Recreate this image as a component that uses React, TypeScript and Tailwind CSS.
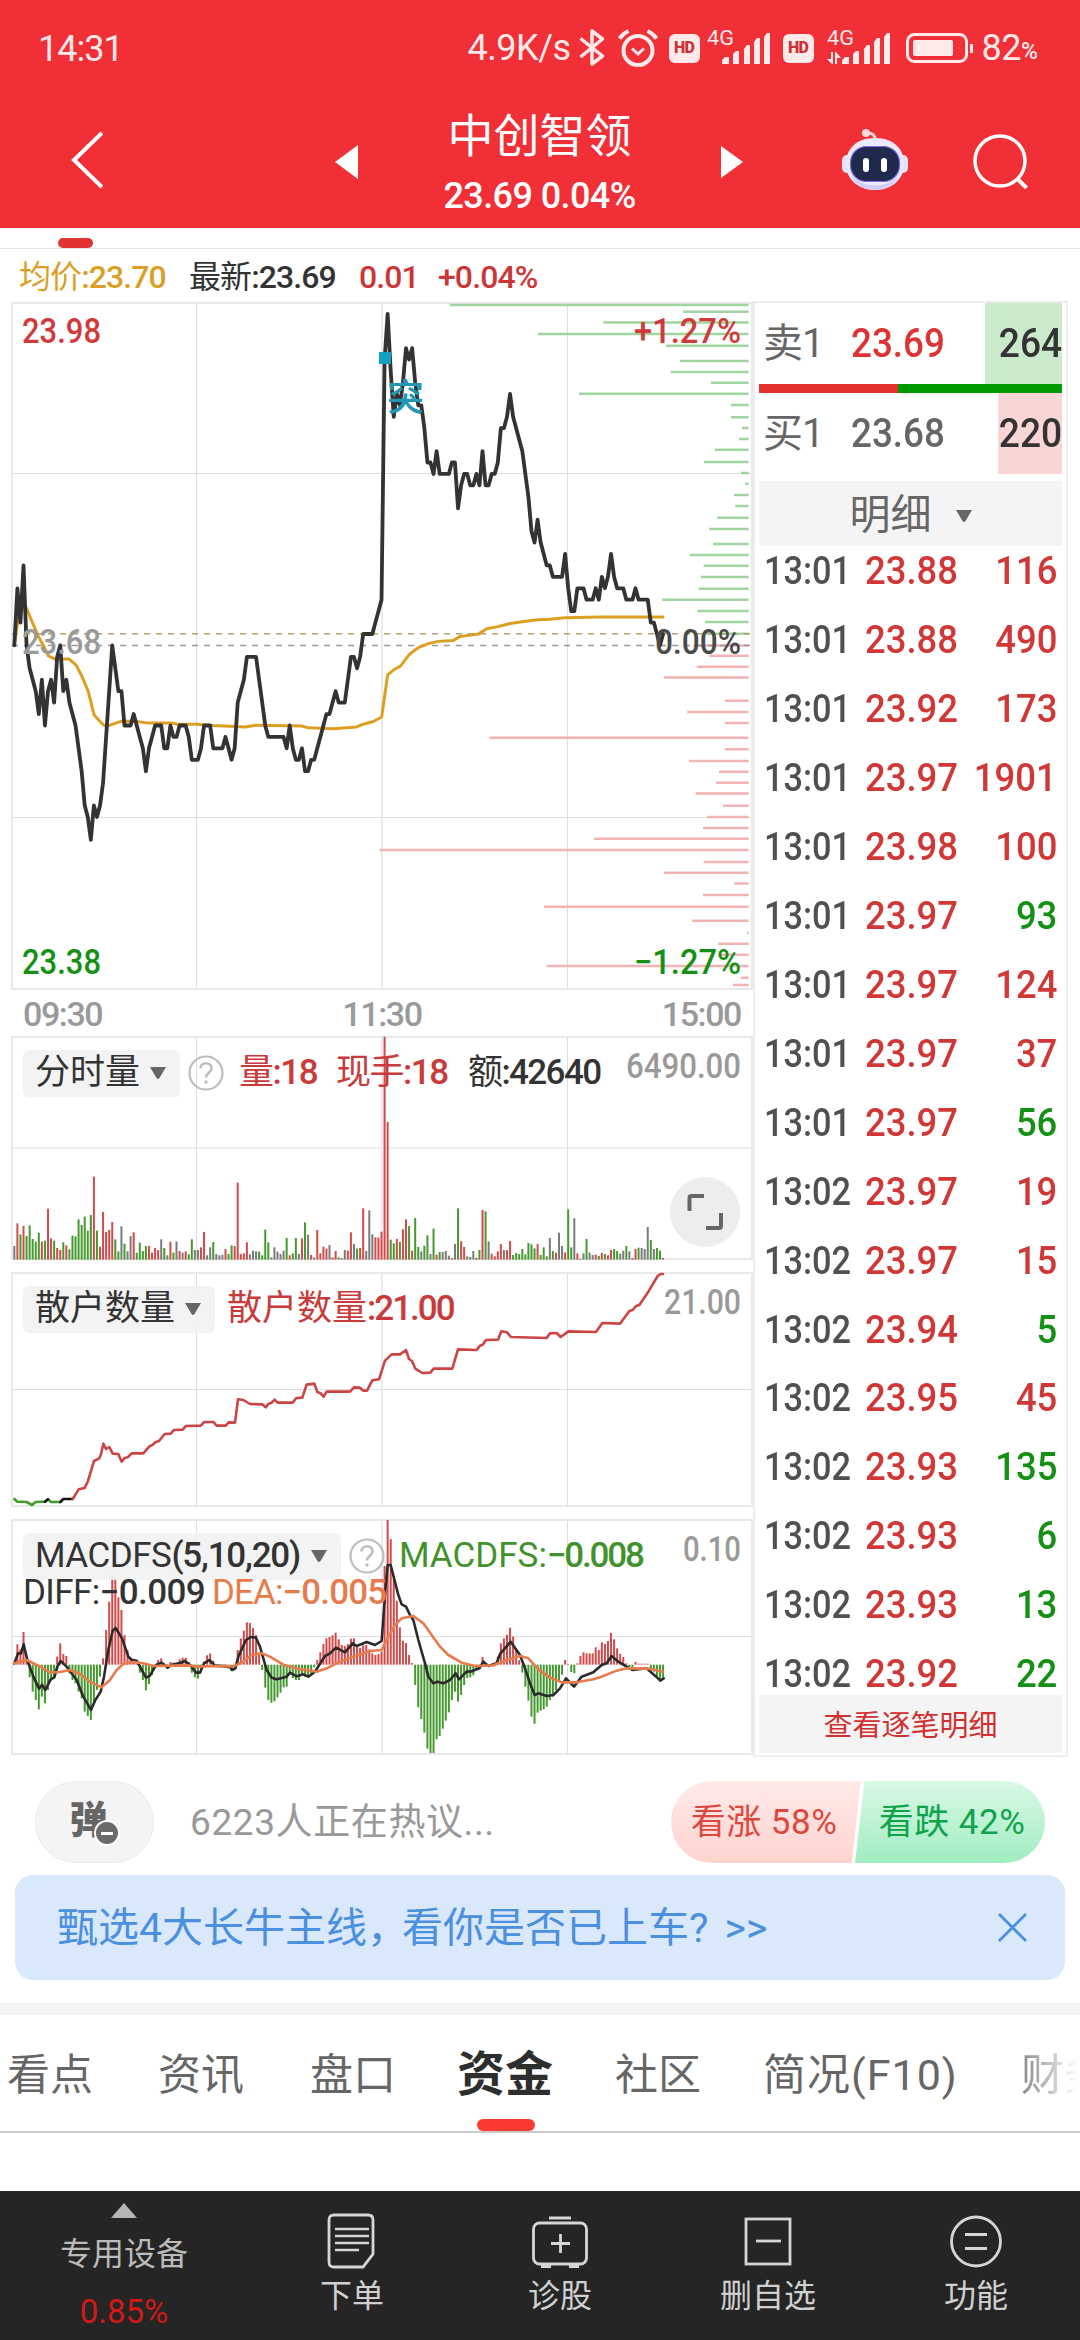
import type { ReactNode } from "react"
import { clsx } from "clsx"

const COLORS: Record<string, string> = { r: "#d24a4a", g: "#45992f", k: "#7b7b7b" }

// one entry per minute, in ticks of 0.01 from the previous close
const prices = [
  0, 5, 2, 7, 0, -2, -3, -4, -6, -3, -7, -4, -3, -5, -1, 0, -4, -3, -5, -6, -7, -9, -11, -14, -15, -17, -14, -15, -14, -12,
  -8, -4, 0, -2, -4, -4, -7, -7, -7, -6, -7, -8, -9, -11, -9, -8, -7, -7, -7, -9, -9, -7, -8, -8, -7, -7, -7, -8, -10, -10,
  -10, -9, -7, -7, -7, -9, -9, -9, -9, -8, -9, -10, -9, -5, -4, -3, -1, -1, -1, -1, -3, -5, -7, -8, -8, -8, -8, -8, -8, -9,
  -7, -9, -10, -10, -9, -11, -11, -10, -10, -9, -8, -7, -6, -6, -5, -4, -5, -5, -5, -3, -1, -1, -2, -1, 1, 1, 1, 1, 2, 3,
  4, 25, 29, 24, 20, 22, 21, 23, 26, 25, 26, 23, 21, 21, 19, 16, 16, 15, 17, 15, 15, 15, 15, 16, 16, 12, 14, 15, 15, 14,
  14, 15, 14, 17, 14, 14, 15, 15, 16, 19, 19, 20, 22, 20, 19, 18, 17, 15, 13, 10, 9, 11, 9, 8, 7, 7, 6, 6, 6, 6,
  8, 5, 3, 3, 5, 5, 5, 4, 4, 4, 5, 4, 6, 5, 6, 8, 6, 5, 5, 5, 4, 4, 4, 5, 4, 4, 4, 4, 2, 2,
  1, 0, 1,
]

const average =
  "43,783 52,740 60,712 70,702 80,703 90,722 115,765 130,785 145,808 165,815 207,815 228,828 245,852 265,887 282,938 300,953 313,962 330,961 365,952 410,953 440,956 515,956 530,959 590,959 640,962 735,965 770,961 905,963 925,967 1000,969 1070,965 1090,959 1120,953 1145,943 1163,850 1183,838 1202,830 1227,806 1240,798 1255,790 1285,781 1315,776 1360,774 1380,765 1435,760 1460,748 1490,744 1535,736 1605,729 1650,727 1695,724 1800,722 1989,722"

// order book depth: [left end, y]
const sellDepth = [
  [270, 33], [969, 48], [730, 72], [534, 97], [918, 123], [960, 157], [932, 181], [1053, 205], [657, 229], [1113, 254],
  [1113, 281], [1146, 305], [1137, 329], [1064, 353], [1032, 380], [1143, 404], [1155, 428], [1122, 453], [1126, 477],
  [1072, 503], [1048, 528], [1059, 561], [990, 585], [1031, 609], [1023, 634], [1016, 660], [906, 684], [1012, 709],
  [1035, 733], [1040, 759],
]
const buyDepth = [
  [1000, 785], [1048, 808], [1010, 832], [912, 856], [1095, 907], [982, 932], [1094, 956], [388, 989], [1094, 1014],
  [987, 1040], [1077, 1064], [1068, 1088], [1007, 1112], [1089, 1139], [1041, 1164], [1029, 1188], [702, 1212], [59, 1237],
  [1031, 1263], [912, 1287], [1123, 1311], [1029, 1336], [552, 1362], [997, 1393], [1161, 1420], [1075, 1444], [1075, 1468],
  [560, 1493], [1143, 1519], [1119, 1535],
]

const volumes = (
  "k678 r610 g643 r618 g648 g616 g657 g665 g638 r665 g662 r566 r655 g662 r684 r690 g667 r676 g688 g647 g649 g598 g615 g590 g632 g585 r470 g632 r680 r576 " +
  "r636 r630 r606 g658 g694 k619 g671 k694 k648 r637 g698 g668 g693 g678 r678 r698 r684 r690 k658 g684 k706 r665 g698 k664 r693 k698 r694 g703 g658 k690 " +
  "k690 r682 r636 k706 k682 g666 k702 k706 k704 r687 g702 g676 r678 r488 r702 r700 r667 k703 k692 k694 g695 g706 g629 g667 k712 k682 k695 k702 k692 g654 " +
  "r706 g700 g654 k702 r655 g607 k644 r705 k712 r630 r700 r680 r686 k675 r712 r693 g712 k714 k690 r692 r637 k672 g686 r684 r565 k693 k571 k643 r652 r653 " +
  "r635 r50 r306 g659 g670 r657 g666 r628 r598 g618 r692 g594 g681 k694 g677 g646 k702 g626 r704 g696 k696 k693 k707 r714 k672 g565 r664 r681 k709 g711 " +
  "k693 r713 g690 r570 g574 k664 r701 r709 r694 r672 k690 r690 r663 g705 g699 g702 g687 g703 g669 g673 g685 r672 g705 g682 g709 k654 g693 r698 k638 k678 " +
  "r697 g568 g682 k595 r700 r716 k700 g657 k698 k705 r704 g708 r699 g702 r706 r690 g687 g693 k701 k692 g678 k694 r714 r687 g683 k684 k687 k621 g660 k687 " +
  "g684 g692 r714"
).split(" ")

const retail =
  "218,1437 236,1408 254,1404 264,1383 282,1323 298,1315 303,1303 310,1271 318,1287 328,1281 338,1301 355,1302 365,1325 374,1314 383,1312 395,1300 430,1300 448,1279 457,1275 466,1267 477,1263 494,1242 512,1241 522,1230 548,1229 558,1218 602,1217 613,1206 640,1206 650,1217 677,1217 686,1207 705,1208 714,1138 730,1140 750,1152 787,1153 797,1162 806,1151 815,1148 824,1139 833,1148 878,1148 889,1134 907,1133 920,1094 943,1091 952,1116 962,1120 971,1130 980,1115 1050,1115 1062,1102 1080,1103 1090,1112 1101,1112 1117,1081 1137,1078 1155,1022 1175,1003 1200,1003 1218,990 1227,1017 1236,1023 1246,1046 1267,1059 1291,1058 1301,1046 1357,1046 1374,988 1430,990 1439,978 1448,974 1458,960 1494,959 1504,934 1521,937 1533,951 1640,954 1650,940 1670,939 1682,951 1705,934 1788,936 1807,909 1860,911 1888,873 1898,870 1908,858 1918,855 1942,820 1973,768 1982,762 1989,762"

const macd = [
  460, 403, 418, 366, 440, 502, 545, 570, 598, 560, 580, 540, 512, 500, 440, 400, 432, 438, 490, 510, 520, 545, 565, 605, 618,
  630, 575, 540, 500, 445, 360, 275, 195, 204, 262, 300, 375, 420, 445, 450, 462, 488, 510, 541, 522, 495, 466, 450, 445, 460,
  470, 456, 458, 460, 448, 443, 444, 456, 488, 502, 506, 485, 455, 436, 430, 452, 462, 470, 468, 462, 476, 482, 468, 420, 385,
  362, 337, 339, 354, 375, 428, 480, 533, 570, 578, 574, 562, 548, 532, 530, 492, 504, 510, 510, 496, 500, 502, 490, 472, 450,
  427, 402, 385, 381, 376, 368, 388, 405, 408, 402, 386, 385, 408, 414, 406, 405, 418, 430, 435, 432, 425, 168, 30, 87, 200,
  272, 352, 392, 399, 435, 459, 525, 592, 627, 668, 716, 729, 729, 688, 678, 656, 632, 607, 570, 545, 575, 555, 525, 504, 502,
  496, 480, 478, 441, 462, 470, 467, 458, 440, 400, 385, 374, 353, 380, 420, 450, 488, 530, 572, 620, 641, 608, 602, 598, 590,
  570, 560, 540, 515, 494, 450, 462, 486, 490, 460, 438, 427, 430, 430, 430, 412, 420, 397, 402, 393, 369, 388, 415, 432, 441,
  460, 470, 472, 456, 461, 461, 461, 461, 478, 485, 500, 514, 502,
]
const diff =
  "43,460 54,430 63,430 71,403 82,450 100,500 117,536 126,524 136,540 152,508 163,502 172,470 182,453 200,470 230,510 250,560 273,600 285,572 302,545 312,500 325,420 338,362 347,354 366,385 385,440 395,449 410,452 428,485 438,503 450,497 468,465 485,458 503,473 515,464 540,459 555,453 570,465 588,488 600,488 612,460 628,450 645,467 690,470 696,480 706,475 715,440 738,390 752,381 768,383 780,410 800,480 815,503 830,508 860,500 870,488 890,499 910,493 925,500 945,485 975,438 990,430 1008,413 1035,427 1058,400 1070,408 1100,396 1125,405 1145,393 1156,240 1163,165 1172,165 1195,255 1205,283 1218,290 1230,315 1240,330 1255,390 1275,460 1285,500 1300,520 1312,515 1330,520 1350,510 1367,490 1377,508 1400,485 1415,484 1438,475 1450,455 1465,468 1490,460 1500,432 1532,395 1560,435 1575,475 1590,520 1604,555 1615,550 1640,558 1660,555 1680,535 1698,505 1722,530 1745,500 1780,487 1805,465 1820,460 1835,438 1855,455 1880,470 1898,480 1940,475 1965,497 1981,512 1991,505"
const dea =
  "43,460 80,450 120,470 150,487 180,486 210,480 240,492 270,515 305,532 330,510 350,480 370,462 400,456 430,460 460,468 560,466 600,470 640,468 700,469 730,455 755,435 785,430 810,440 850,464 900,478 950,485 980,475 1010,460 1060,440 1110,423 1145,420 1165,380 1185,345 1205,325 1240,318 1270,340 1295,375 1320,410 1345,435 1385,458 1425,468 1480,466 1520,450 1560,438 1585,445 1615,478 1650,503 1685,517 1730,517 1780,508 1800,502 1850,482 1880,475 1948,476 1989,485"

const trades: [string, string, string, boolean][] = [
  ["13:01", "23.88", "116", true],
  ["13:01", "23.88", "490", true],
  ["13:01", "23.92", "173", true],
  ["13:01", "23.97", "1901", true],
  ["13:01", "23.98", "100", true],
  ["13:01", "23.97", "93", false],
  ["13:01", "23.97", "124", true],
  ["13:01", "23.97", "37", true],
  ["13:01", "23.97", "56", false],
  ["13:02", "23.97", "19", true],
  ["13:02", "23.97", "15", true],
  ["13:02", "23.94", "5", false],
  ["13:02", "23.95", "45", true],
  ["13:02", "23.93", "135", false],
  ["13:02", "23.93", "6", false],
  ["13:02", "23.93", "13", false],
  ["13:02", "23.92", "22", false],
]

const minuteX = (i: number) => 43 + i * 9.18

function Line({ points, stroke, width = 4 }: { points: string; stroke: string; width?: number }) {
  return (
    <polyline
      points={points}
      fill="none"
      stroke={stroke}
      strokeWidth={width}
      strokeLinejoin="round"
      strokeLinecap="round"
      vectorEffect="non-scaling-stroke"
    />
  )
}

function Grid({ height, rows }: { height: number; rows: number[] }) {
  return (
    <g stroke="#dedede" strokeWidth="1">
      {rows.map((y) => <path key={y} d={`M12 ${y}H753`} />)}
      <path d={`M196.500 0V${height}M567.500 0V${height}`} />
      <path d={`M382 0V${height}`} stroke="#ebebeb" strokeWidth="2" />
      <rect x="12" y="1" width="740" height={height - 2} fill="none" stroke="#e9e9e9" strokeWidth="2" />
    </g>
  )
}

function Label({ x, y, w, color, children, end }: { x: number; y: number; w: number; color: string; children: string; end?: boolean }) {
  return (
    <text
      x={x}
      y={y}
      fill={color}
      fontSize="34.500"
      fontWeight="500"
      textAnchor={end ? "end" : "start"}
      textLength={w}
      lengthAdjust="spacingAndGlyphs"
    >
      {children}
    </text>
  )
}

function Caret({ className }: { className?: string }) {
  return <svg viewBox="0 0 16 12" className={clsx("h-3 w-4", className)}><path d="M0 0h16L9.500 11q-1.500 2-3 0z" fill="#666" /></svg>
}

function Selector({ children, className }: { children: ReactNode; className: string }) {
  return (
    <div className={clsx("flex h-[47px] items-center justify-between rounded-md bg-[#f2f2f2]/90 pl-3 pr-3.5 text-[35px] text-[#333]", className)}>
      <span className="whitespace-nowrap">{children}</span>
      <Caret />
    </div>
  )
}

function Help() {
  return (
    <svg viewBox="0 0 36 36" className="size-9" fill="none" stroke="#bdbdbd" strokeWidth="2.200">
      <circle cx="18" cy="18" r="16.500" />
      <path d="M12.500 13.500c0-7 11-7 11 0 0 4-5.500 4.500-5.500 9" strokeWidth="2.500" />
      <circle cx="18" cy="27" r="1.700" fill="#bdbdbd" stroke="none" />
    </svg>
  )
}

function Signal({ data }: { data?: boolean }) {
  return (
    <svg viewBox="0 0 67 44" className="h-11 w-[67px] shrink-0" fill="#ffe9e9">
      <text x="0" y="21" fontSize="21" textLength="27" lengthAdjust="spacingAndGlyphs">4G</text>
      <path d="M15 40v-4l3-3h4v7zM26 40V30l3-3h3v13zM37 40V25l3-4h3v19zM47 40V18l3-4h3v26zM57 40V13l3-4h3v31z" />
      {data && <path d="M0 35h4v-7h2v12H5zM8 40V28h1l5 6h-4v6z" />}
    </svg>
  )
}

function Hd() {
  return (
    <span className="flex h-[29px] w-[31px] items-center justify-center rounded-md bg-[#ffe9e9] text-[16px] font-black tracking-tighter text-[#c93338]">
      HD
    </span>
  )
}

function StatusBar() {
  return (
    <div className="flex h-24 items-center pl-[38px] pr-[42px] text-[36px] text-[#ffe9e9]">
      <span className="pt-0.5 tracking-[-1px]">14:31</span>
      <span className="ml-auto tracking-[-0.500px]">4.9K/s</span>
      <svg viewBox="0 0 26 40" className="ml-2 h-10 w-[26px]" fill="none" stroke="#ffe9e9" strokeWidth="3.500">
        <path d="M1.500 10.500l22 17.500L13 36V3l10.500 8L1.500 29" strokeLinejoin="round" />
      </svg>
      <svg viewBox="0 0 40 38" className="ml-[13px] h-[38px] w-10" fill="none" stroke="#ffe9e9" strokeWidth="4">
        <circle cx="20" cy="21.500" r="14.500" />
        <path d="M1.500 9.500C4 6 7 3.500 10.500 2M38.500 9.500C36 6 33 3.500 29.500 2" />
        <path d="M14 19.500l6 5.500 6-5.500" strokeWidth="3" />
      </svg>
      <div className="ml-[11px] flex items-center">
        <Hd />
        <div className="mb-1 ml-[7px]"><Signal /></div>
        <div className="ml-[9px]"><Hd /></div>
        <div className="mb-1 ml-[13px]"><Signal data /></div>
      </div>
      <svg viewBox="0 0 68 30" className="ml-3 h-[30px] w-[68px]" fill="none" stroke="#ffe9e9" strokeWidth="3">
        <rect x="1.500" y="1.500" width="59" height="27" rx="7" />
        <rect x="7" y="7" width="40" height="16" rx="2" fill="#ffe9e9" stroke="none" />
        <path d="M65.500 11v9" />
      </svg>
      <span className="ml-2 tracking-[-0.500px]">82</span>
      <span className="mt-2 text-[23px] font-medium">%</span>
    </div>
  )
}

function Robot() {
  return (
    <svg viewBox="0 0 66 62" className="h-[62px] w-[66px]">
      <circle cx="24" cy="4" r="4" fill="#ffd9de" />
      <path d="M25 4c6 0 8 2 8.500 7" stroke="#ffd9de" strokeWidth="3" fill="none" />
      <rect x="0" y="26" width="10" height="18" rx="5" fill="#e2e3fb" />
      <rect x="56" y="26" width="10" height="18" rx="5" fill="#e2e3fb" />
      <path d="M33 9c19 0 29 11 29 26S50 61 33 61 4 50 4 35 14 9 33 9z" fill="#ece9fb" />
      <path d="M10 46c8 14 38 14 46 0-3 10-12 15-23 15S13 56 10 46z" fill="#cfcdf5" />
      <rect x="8.500" y="17.500" width="49" height="35" rx="16" fill="#202a4e" stroke="#7a6be0" strokeWidth="1.200" />
      <rect x="21" y="29" width="6" height="14" rx="3" fill="#fff" />
      <rect x="39" y="29" width="6" height="14" rx="3" fill="#fff" />
    </svg>
  )
}

function Header() {
  return (
    <header className="h-[228px] bg-[#f12f37] text-white">
      <StatusBar />
      <div className="flex h-[128px] items-center">
        <svg viewBox="0 0 32 58" className="ml-[71px] h-[58px] w-8" fill="none" stroke="#fff" strokeWidth="4">
          <path d="M31 2L3 29l28 27" />
        </svg>
        <svg viewBox="0 0 23 34" className="ml-[232px] mt-[3px] h-[34px] w-[23px]"><path d="M23 0v34L0 17z" fill="#fff" /></svg>
        <div className="flex w-[363px] flex-col items-center pt-2">
          <h1 className="text-[46px] leading-[60px]">中创智领</h1>
          <p className="mt-1 text-[36px] font-medium leading-[52px] tracking-[-0.600px]">23.69 0.04%</p>
        </div>
        <svg viewBox="0 0 22 32" className="mt-[3px] h-8 w-[22px]"><path d="M0 0v32l22-16z" fill="#fff" /></svg>
        <div className="ml-[99px]"><Robot /></div>
        <svg viewBox="0 0 56 56" className="ml-[65px] mt-[2px] h-14 w-14" fill="none" stroke="#fff" strokeWidth="3.500">
          <circle cx="27" cy="28" r="25" />
          <path d="M43.500 45l10 10" strokeWidth="4" />
        </svg>
      </div>
    </header>
  )
}

function PriceChart() {
  const points = prices.map((p, i) => `${minuteX(i)},${785 - p * 25.25}`).join(" ")
  return (
    <svg viewBox="0 0 754 688" className="h-[688px] w-[754px]">
      <Grid height={688} rows={[171.5, 515.5]} />
      <g transform="translate(0 -12) scale(.33333 .4528)" fill="none">
        <path d={sellDepth.map(([x, y]) => `M${x + 1080} ${y}H2246`).join("")} stroke="#a0d5a0" strokeWidth="2.5" vectorEffect="non-scaling-stroke" />
        <path d={buyDepth.map(([x, y]) => `M${x + 1080} ${y}H2246`).join("")} stroke="#f2b3b3" strokeWidth="2.5" vectorEffect="non-scaling-stroke" />
      </g>
      <path d="M12 331.700H750" stroke="#b5a06e" strokeWidth="1.500" strokeDasharray="6 6" />
      <path d="M12 343.500H750" stroke="#999" strokeWidth="1.500" strokeDasharray="6 6" />
      <g transform="translate(0 -12) scale(.33333 .4528)">
        <Line points={average} stroke="#dd9f22" width={3} />
        <Line points={points} stroke="#333" width={3.8} />
      </g>
      <rect x="379" y="50" width="12" height="12" fill="#16a0c0" />
      <text x="387" y="109" fontSize="37" fontWeight="500" fill="#2197b4" fontFamily="Noto Sans CJK SC">突</text>
      <Label x={22} y={41} w={79} color="#d13a3a">23.98</Label>
      <Label x={22} y={352} w={79} color="#9a9a9a">23.68</Label>
      <Label x={22} y={672} w={79} color="#149014">23.38</Label>
      <Label x={741} y={41} w={107} color="#d13a3a" end>+1.27%</Label>
      <Label x={741} y={352} w={86} color="#4a4a4a" end>0.00%</Label>
      <Label x={741} y={672} w={107} color="#149014" end>−1.27%</Label>
    </svg>
  )
}

function VolumePanel() {
  return (
    <div className="relative h-[224px]">
      <svg viewBox="0 0 754 224" className="absolute inset-0 h-[224px] w-[754px]">
        <Grid height={224} rows={[112]} />
        <g transform="translate(0 -16) scale(.33333)">
          {volumes.map((v, i) => {
            const top = Number(v.slice(1))
            return <rect key={i} x={minuteX(i) - 3} y={top} width="6" height={719 - top} fill={COLORS[v[0]]} />
          })}
        </g>
        <Label x={741} y={42} w={115} color="#999" end>6490.00</Label>
      </svg>
      <div className="relative flex items-center pl-[23px] pt-[11px] text-[35px] text-[#333]">
        <Selector className="w-[157px]">分时量</Selector>
        <div className="ml-2"><Help /></div>
        <span className="ml-[15px] w-[97px] whitespace-nowrap tracking-[-1.500px] text-[#c93a3a]">量<b className="font-medium">:18</b></span>
        <span className="w-[132px] whitespace-nowrap tracking-[-1.500px] text-[#c93a3a]">现手<b className="font-medium">:18</b></span>
        <span className="whitespace-nowrap tracking-[-1.600px]">额<b className="font-medium">:42640</b></span>
      </div>
      <div className="absolute left-[670px] top-[141px] flex size-[70px] items-center justify-center rounded-full bg-[#ededed]">
        <svg viewBox="0 0 36 36" className="size-9" fill="none" stroke="#666" strokeWidth="4">
          <path d="M2.500 17V4q0-2 2-2H17M34 19v13q0 2-2 2H19" />
        </svg>
      </div>
    </div>
  )
}

function RetailPanel() {
  return (
    <div className="relative mt-3 h-[235px]">
      <svg viewBox="0 0 754 235" className="absolute inset-0 h-[235px] w-[754px]">
        <Grid height={235} rows={[117.5]} />
        <g transform="translate(0 -252) scale(.33333)">
          <Line points="43,1437 52,1445 80,1446 96,1455 107,1446 135,1445 144,1438 153,1446 181,1446" stroke="#45992f" width={2.6} />
          <Line points="135,1445 144,1438" stroke="#111" width={2.6} />
          <Line points="181,1446 190,1437 218,1437" stroke="#111" width={2.6} />
          <Line points={retail} stroke="#cc4444" width={2.6} />
        </g>
        <Label x={741} y={42} w={77} color="#999" end>21.00</Label>
      </svg>
      <div className="relative flex items-center pl-[23px] pt-[11px] text-[35px]">
        <Selector className="w-[192px]">散户数量</Selector>
        <span className="ml-3 whitespace-nowrap text-[#c93a3a]">散户数量<b className="font-medium tracking-[-2px]">:21.00</b></span>
      </div>
    </div>
  )
}

function MacdPanel() {
  return (
    <div className="relative mt-3 h-[236px]">
      <svg viewBox="0 0 754 236" className="absolute inset-0 h-[236px] w-[754px]">
        <Grid height={236} rows={[117.5]} />
        <g transform="translate(0 -9) scale(.33333)">
          {macd.map((v, i) => (
            <rect key={i} x={minuteX(i) - 3} y={Math.min(v, 464)} width="6" height={Math.abs(464 - v)} fill={v < 464 ? COLORS.r : COLORS.g} />
          ))}
          <Line points={diff} stroke="#2b2b2b" width={2.6} />
          <Line points={dea} stroke="#e87b4c" width={2.6} />
        </g>
        <Label x={741} y={42} w={58} color="#999" end>0.10</Label>
      </svg>
      <div className="relative flex items-center pl-[23px] pt-[11px] text-[35px]">
        <Selector className="w-[318px] tracking-[-0.500px]">MACDFS<b className="font-medium tracking-[-1.200px]">(5,10,20)</b></Selector>
        <div className="ml-2"><Help /></div>
        <span className="ml-3.5 whitespace-nowrap text-[#41922c]">MACDFS:<b className="font-medium tracking-[-2.200px]">−0.008</b></span>
      </div>
      <div className="relative -mt-[13px] flex pl-[23px] text-[35px] leading-[46px]">
        <span className="w-[189px] whitespace-nowrap tracking-[-0.600px] text-[#333]">DIFF:<b className="font-medium">−0.009</b></span>
        <span className="whitespace-nowrap tracking-[-0.900px] text-[#e87b4c]">DEA:<b className="font-medium">−0.005</b></span>
      </div>
    </div>
  )
}

function Quote({ name, price, amount, up, depth }: { name: string; price: string; amount: string; up?: boolean; depth: string }) {
  return (
    <div className="flex h-[81px] items-stretch text-[40px] text-[#666]">
      <span className="flex w-[92px] items-center pl-1 tracking-[-1px]">{name}</span>
      <span className={clsx("flex flex-1 origin-left scale-x-[0.92] items-center font-medium", up && "text-[#dc3434]")}>{price}</span>
      <span className={clsx("flex items-center justify-end text-[#333]", depth)}>
        <b className="origin-right scale-x-[0.93] font-medium">{amount}</b>
      </span>
    </div>
  )
}

function TradePanel() {
  return (
    <aside className="-ml-px mt-[-1px] h-[1456px] w-[315px] border-2 border-[#ededed] bg-white pl-1 pr-1">
      <Quote name="卖1" price="23.69" amount="264" up depth="w-[77px] bg-[#cbe9cb]" />
      <div className="flex h-[9px]">
        <div className="w-[139px] bg-[#e63131]" />
        <div className="flex-1 bg-[#039903]" />
      </div>
      <Quote name="买1" price="23.68" amount="220" depth="w-[64px] bg-[#f9d5d5]" />
      <div className="mt-[7px] flex h-[65px] items-center justify-center gap-6 bg-[#f4f4f4] pt-1 text-[41px] text-[#666]">
        明细
        <Caret />
      </div>
      <div className="h-[1149px] overflow-hidden">
        <ul className="-mt-[9px]">
          {trades.map(([time, price, amount, up], i) => (
            <li key={i} className="flex h-[68.950px] items-center pl-[5px] pr-[5px] text-[39px] font-medium">
              <span className="w-[101px] origin-left scale-x-[0.88] text-[#505050]">{time}</span>
              <span className="origin-left scale-x-[0.935] text-[#d03838]">{price}</span>
              <span className={clsx("ml-auto origin-right scale-x-[0.935]", up ? "text-[#d03838]" : "text-[#149014]")}>{amount}</span>
            </li>
          ))}
        </ul>
      </div>
      <div className="flex h-[58px] items-center justify-center bg-[#f4f4f4] pt-1.5 text-[29px] text-[#d23030]">查看逐笔明细</div>
    </aside>
  )
}

function Discussion() {
  return (
    <section className="px-[15px] pt-[26px]">
      <div className="flex h-[82px] items-center pl-5 pr-5">
        <div className="relative flex h-[82px] w-[119px] items-center justify-center rounded-full border border-[#ebebeb] bg-[#f4f4f4]">
          <span className="mb-1 mr-3 text-[38px] font-black text-[#666]">弹</span>
          <span className="absolute left-[60px] top-[40px] flex size-[22px] items-center justify-center rounded-full bg-[#6b6b6b] ring-2 ring-white">
            <span className="h-[3px] w-3 bg-white" />
          </span>
        </div>
        <span className="ml-9 pt-0.5 text-[37px] tracking-[0.600px] text-[#999]">6223人正在热议...</span>
        <div className="ml-auto flex h-[82px] w-[374px] whitespace-nowrap text-[35px]">
          <div className="flex w-[190px] items-center justify-center rounded-l-full bg-linear-to-b from-[#ffeae9] to-[#fdd3cf] pr-1 pt-0.5 tracking-[0.500px] text-[#dc4840] [clip-path:polygon(0_0,100%_0,95%_100%,0_100%)]">
            看涨 58%
          </div>
          <div className="-ml-[6px] flex w-[190px] items-center justify-center rounded-r-full bg-linear-to-b from-[#d9f8e6] to-[#a0edc1] pl-1 pt-0.5 tracking-[0.500px] text-[#0fa34b] [clip-path:polygon(5%_0,100%_0,100%_100%,0_100%)]">
            看跌 42%
          </div>
        </div>
      </div>
      <div className="mt-3 flex h-[105px] items-center justify-between rounded-[18px] bg-[#dae8fb] pl-[42px] pr-[38px] text-[41px] text-[#4b8fdf]">
        <span className="whitespace-nowrap pt-0.5">
          甄选4大长牛主线<span className="-mr-[6px]">，</span>看你是否已上车? <span className="ml-1.5">&gt;&gt;</span>
        </span>
        <svg viewBox="0 0 29 29" className="size-[29px]" stroke="#4b8fdf" strokeWidth="2.800"><path d="M1 1l27 27M28 1L1 28" /></svg>
      </div>
    </section>
  )
}

function Tabs() {
  return (
    <nav className="relative flex h-[118px] items-center overflow-hidden whitespace-nowrap border-b-2 border-[#cacaca] pl-[7px] pt-1 text-[43px] text-[#666]">
      <span className="w-[151px] shrink-0">看点</span>
      <span className="w-[152px] shrink-0">资讯</span>
      <span className="w-[147px] shrink-0">盘口</span>
      <span className="w-[158px] shrink-0 text-[48px] font-bold text-[#2e2e2e]">资金</span>
      <span className="w-[148px] shrink-0">社区</span>
      <span className="w-[258px] shrink-0 tracking-[1px]">简况(F10)</span>
      <span className="w-[57px] shrink-0 overflow-hidden bg-linear-to-r from-[#888] to-[#fff] bg-clip-text text-transparent">财务</span>
      <span className="absolute bottom-0 left-[477px] h-3 w-[58px] rounded-full bg-[#fb3b31]" />
    </nav>
  )
}

function NavItem({ label, children }: { label: string; children: ReactNode }) {
  return (
    <div className="flex w-[208px] flex-col items-center pt-[22px]">
      <svg viewBox="0 0 56 56" className="size-14" fill="none" stroke="#d6d6d6" strokeWidth="2.800">{children}</svg>
      <span className="mt-1 text-[32px] leading-[46px]">{label}</span>
    </div>
  )
}

function BottomBar() {
  return (
    <footer className="mt-[58px] flex h-[149px] bg-[#252525] text-[#d0d0d0]">
      <div className="flex w-[248px] flex-col items-center pt-3">
        <svg viewBox="0 0 26 15" className="h-[15px] w-[26px]"><path d="M13 0l13 15H0z" fill="#b5b5b5" /></svg>
        <span className="mt-[13px] text-[32px] leading-[46px] text-[#bbb]">专用设备</span>
        <span className="mt-3 text-[33px] leading-[46px] text-[#d31818]">0.85%</span>
      </div>
      <NavItem label="下单">
        <path d="M10 2h34q5 0 5 5v34L39 54H10q-5 0-5-5V7q0-5 5-5z" />
        <path d="M11 16h34M11 23h34M11 30h34M11 37h24" strokeWidth="2.400" />
      </NavItem>
      <NavItem label="诊股">
        <rect x="1.500" y="10" width="53" height="41" rx="6" />
        <path d="M17 5h22M19 30.500h19M28.500 21v19" />
        <path d="M9 53.500h10M37 53.500h10" />
      </NavItem>
      <NavItem label="删自选">
        <rect x="6" y="6" width="44" height="45" />
        <path d="M16 28h25" />
      </NavItem>
      <NavItem label="功能">
        <circle cx="28" cy="28.500" r="24.500" />
        <path d="M17 21.500h22M17 35.500h22" />
      </NavItem>
    </footer>
  )
}

export default function App() {
  return (
    <div className="h-[2340px] w-[1080px] overflow-hidden bg-white font-[Roboto,'Noto_Sans_CJK_SC',sans-serif]">
      <Header />
      <div className="flex h-[21px] items-end border-b border-[#e3e3e3] pl-[58px]">
        <div className="h-[10px] w-[35px] rounded-full bg-[#e23333]" />
      </div>
      <div className="flex h-[53px] items-center whitespace-nowrap pl-[19px] pt-0.5 text-[32px] tracking-[-0.900px]">
        <span className="w-[170px] text-[#d99f27]">均价<b className="font-medium">:23.70</b></span>
        <span className="w-[170px] text-[#333]">最新<b className="font-medium">:23.69</b></span>
        <span className="w-[79px] font-medium text-[#cb3636]">0.01</span>
        <span className="font-medium text-[#cb3636]">+0.04%</span>
      </div>
      <main className="flex h-[1453px]">
        <div className="w-[754px]">
          <PriceChart />
          <div className="flex h-[46px] items-center justify-between pl-[23px] pr-[13px] pt-0.5 text-[34px] font-medium tracking-[-1.400px] text-[#999]">
            <span>09:30</span>
            <span>11:30</span>
            <span>15:00</span>
          </div>
          <VolumePanel />
          <RetailPanel />
          <MacdPanel />
        </div>
        <TradePanel />
      </main>
      <Discussion />
      <div className="mt-[23px] h-3 bg-[#f4f4f4]" />
      <Tabs />
      <BottomBar />
    </div>
  )
}
